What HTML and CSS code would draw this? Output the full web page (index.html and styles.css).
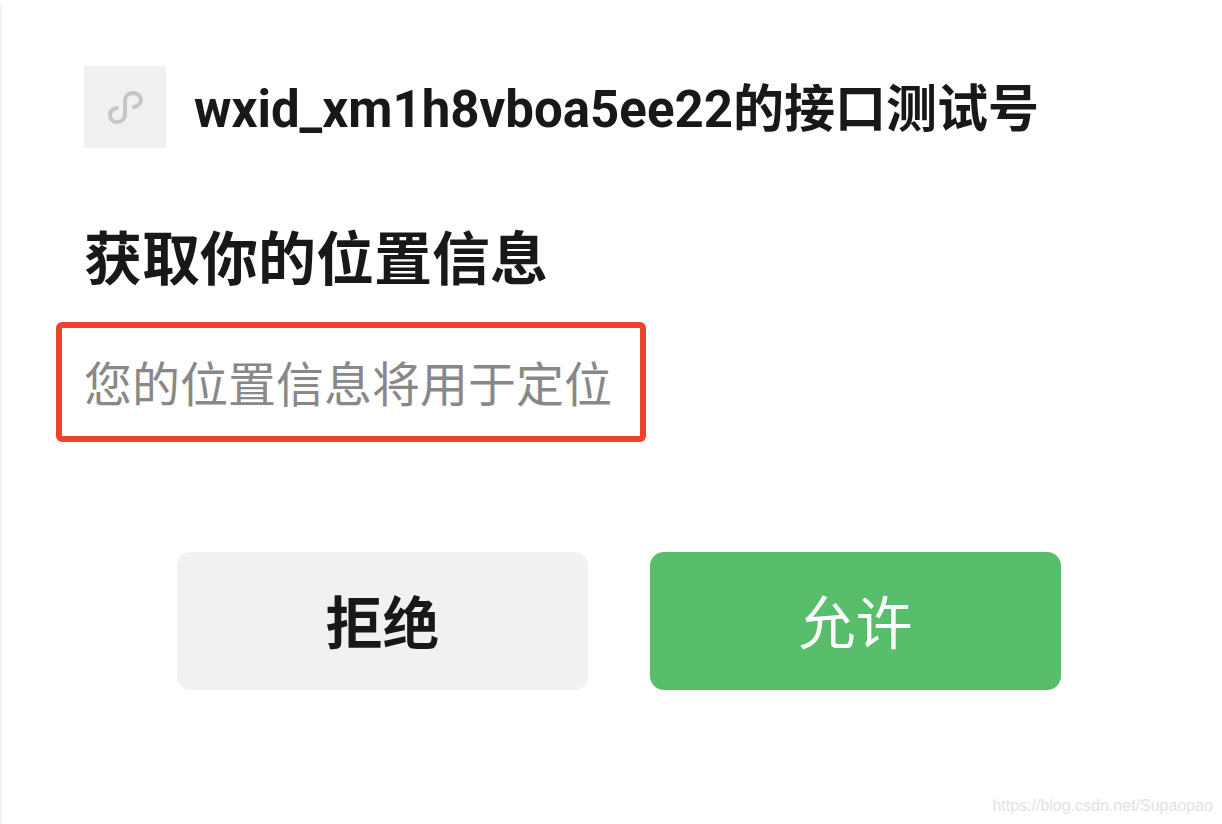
FILE: index.html
```html
<!DOCTYPE html>
<html lang="zh-CN">
<head>
    <meta charset="UTF-8">
    <meta name="viewport" content="width=device-width, initial-scale=1.0">
    <title>获取你的位置信息</title>
    <link rel="stylesheet" href="styles.css">
</head>
<body>
    <main class="dialog">
        <header class="app">
            <div class="app-icon">
                <svg viewBox="0 0 82 82" fill="none" stroke="#c6c6c6" stroke-width="4" stroke-linecap="round">
                    <path d="M33 42C28 43 26 46 26 49C26 53 29 56 33 56C38 56 41 53 41 48V35C41 30 44 27 49 27C53 27 57 30 57 34C57 37 54 40 50 41"/>
                </svg>
            </div>
            <h1 class="app-name">wxid_xm1h8vboa5ee22的接口测试号</h1>
        </header>
        <h2 class="title">获取你的位置信息</h2>
        <p class="desc">您的位置信息将用于定位</p>
        <div class="actions">
            <button class="btn reject">拒绝</button>
            <button class="btn allow">允许</button>
        </div>
    </main>
    <footer class="source">
        <a href="https://blog.csdn.net/Supaopao">https://blog.csdn.net/Supaopao</a>
    </footer>
</body>
</html>
```
FILE: styles.css
```css
* {
  margin: 0;
  padding: 0;
  box-sizing: border-box;
}

body {
  font-family: Roboto, "Noto Sans CJK SC", sans-serif;
  display: flex;
  flex-direction: column;
  min-height: 100vh;
  padding-top: 6px;
  background-color: #fff;
  color: #181818;
}

/* Dialog */
.dialog {
  flex: 1;
  padding: 60px 56px 0 54px;
  border-left: 2px solid #f4f4f4;
}

.app {
  display: flex;
  align-items: center;
  gap: 28px;
  padding-left: 28px;
}

.app-icon {
  width: 82px;
  height: 82px;
  background-color: #f0f0f0;
}

.app-icon svg {
  display: block;
}

.app-name {
  padding-top: 6px;
  font-size: 51px;
  line-height: 76px;
  font-weight: 700;
}

.title {
  margin-top: 70px;
  padding-left: 28px;
  font-size: 58px;
  line-height: 84px;
  font-weight: 700;
}

.desc {
  width: fit-content;
  margin-top: 20px;
  padding: 22px 28px 14px 22px;
  border: 6px solid #f04030;
  border-radius: 6px;
  font-size: 48px;
  line-height: 72px;
  font-weight: 400;
  color: #888;
}

/* Buttons */
.actions {
  display: grid;
  grid-template-columns: 1fr 1fr;
  gap: 62px;
  margin-top: 110px;
  padding: 0 105px 0 121px;
}

.btn {
  height: 138px;
  padding-bottom: 4px;
  border: none;
  border-radius: 14px;
  font-family: inherit;
  font-size: 57px;
  cursor: pointer;
}

.reject {
  background-color: #f1f1f1;
  color: #181818;
  font-weight: 700;
}

.allow {
  background-color: #59be6b;
  color: #fff;
}

/* Blog address */
.source {
  padding: 0 9px 8px;
  border-left: 2px solid #f4f4f4;
  text-align: right;
  font-family: "Liberation Sans", Arial, sans-serif;
  font-size: 16px;
  line-height: 20px;
}

.source a {
  color: #e2e2e2;
  text-decoration: none;
}
```
